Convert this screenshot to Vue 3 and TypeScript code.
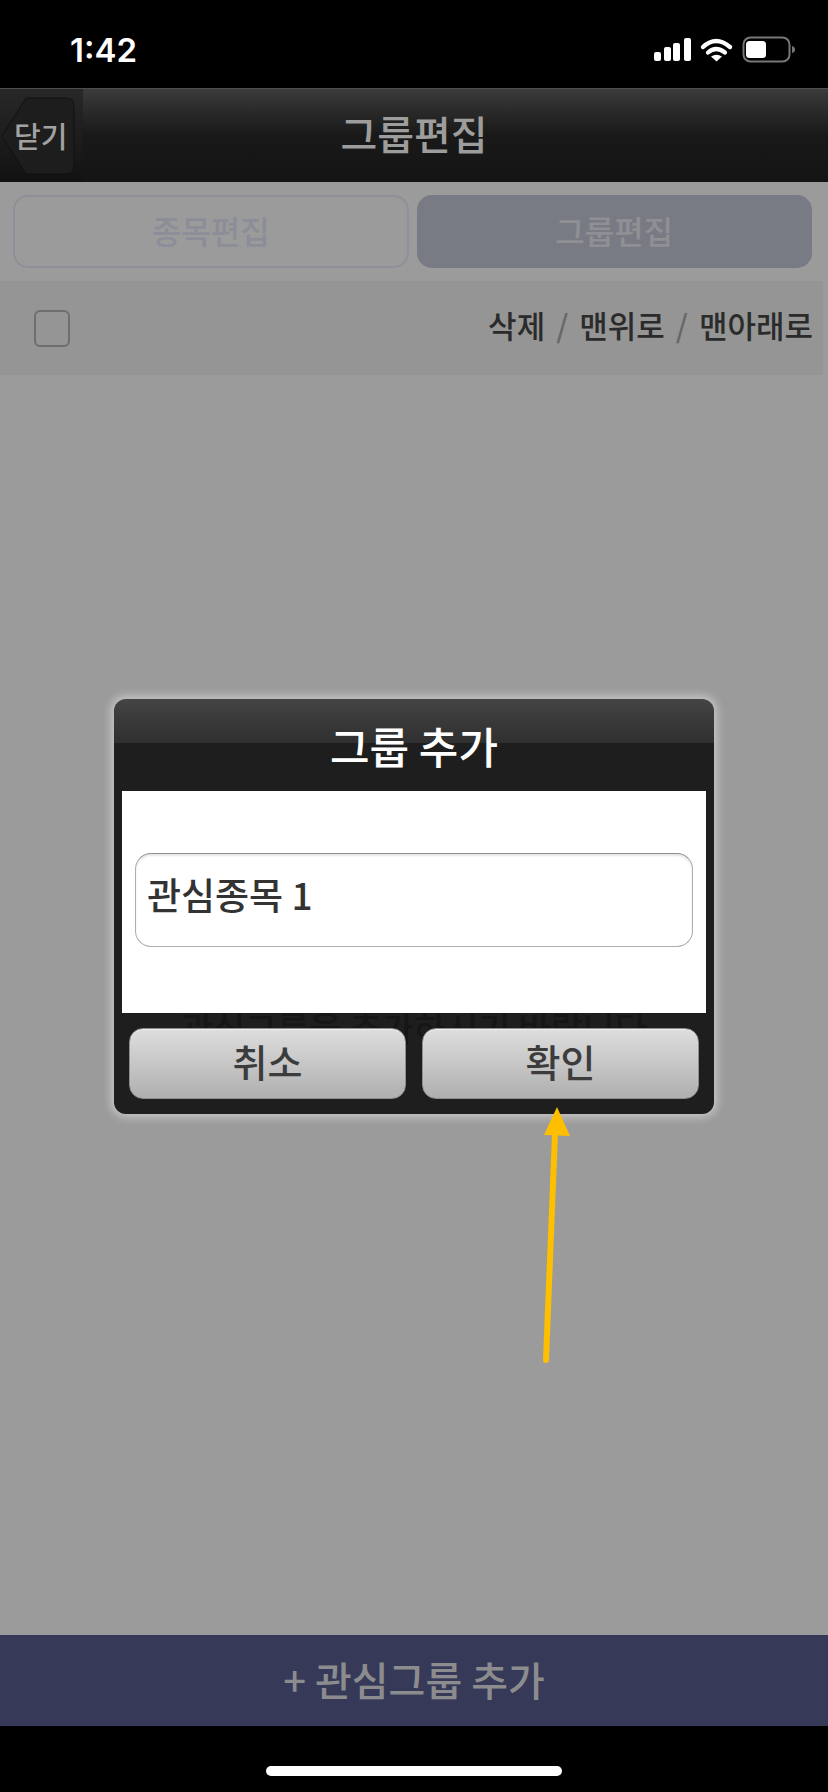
<template>
  <div class="screen">
    <header class="status-bar">
      <span class="clock">1:42</span>
      <svg class="status-icons" width="160" height="40" viewBox="0 0 160 40">
        <rect x="8" y="22" width="7" height="9" rx="2" fill="#fff" />
        <rect x="18" y="17" width="7" height="14" rx="2" fill="#fff" />
        <rect x="27" y="13" width="7" height="18" rx="2" fill="#fff" />
        <rect x="38" y="8" width="7" height="23" rx="2" fill="#fff" />
        <path d="M57 17 Q70 5 84 17" fill="none" stroke="#fff" stroke-width="4.4" stroke-linecap="round" />
        <path d="M62 22.5 Q70 15.5 79 22.5" fill="none" stroke="#fff" stroke-width="4.2" stroke-linecap="round" />
        <path d="M65 26.5 L70.5 31.5 L76 26.5 Q70.5 23 65 26.5 Z" fill="#fff" />
        <rect x="97.5" y="7.5" width="46" height="24" rx="7" fill="none" stroke="#777" stroke-width="2" />
        <rect x="100" y="11" width="20" height="17" rx="3.5" fill="#fff" />
        <path d="M146 16 Q149 17 149 19.5 Q149 22 146 23 Z" fill="#777" />
      </svg>
    </header>

    <nav class="nav-bar">
      <div class="back-cell">
        <svg class="back-shape" width="76" height="78" viewBox="0 0 76 78">
          <path
            d="M26 1 H66 Q74 1 74 9 V69 Q74 77 66 77 H26 L2 39 Z"
            fill="#1d1d1d"
            stroke="#111"
            stroke-width="1"
          />
        </svg>
        <span class="back-label">닫기</span>
      </div>
      <h1 class="nav-title">그룹편집</h1>
    </nav>

    <div class="segments">
      <div class="segment">종목편집</div>
      <div class="segment active">그룹편집</div>
    </div>

    <div class="toolbar">
      <span class="checkbox"></span>
      <div class="toolbar-actions">
        <span>삭제</span><i>/</i><span>맨위로</span><i>/</i><span>맨아래로</span>
      </div>
    </div>

    <main class="content"></main>

    <div class="add-bar">+ 관심그룹 추가</div>

    <footer class="home-area">
      <span class="home-bar"></span>
    </footer>

    <section class="dialog">
      <span class="behind-text">관심그룹을 추가하시기 바랍니다</span>
      <h2 class="dialog-title">그룹 추가</h2>
      <div class="dialog-body">
        <div class="field">관심종목 1</div>
      </div>
      <div class="dialog-actions">
        <button class="dialog-btn">취소</button>
        <button class="dialog-btn">확인</button>
      </div>
    </section>

    <svg class="arrow" width="40" height="260" viewBox="0 0 40 260">
      <line x1="12" y1="256" x2="21" y2="30" stroke="#fdbf00" stroke-width="6" stroke-linecap="round" />
      <path d="M23 3 L36 32 L10 31 Z" fill="#fdbf00" />
    </svg>
  </div>
</template>

<script setup lang="ts">
</script>

<style>
body {
  background: #000;
}
</style>

<style scoped>
.screen {
  position: relative;
  display: flex;
  flex-direction: column;
  width: 828px;
  height: 1792px;
  overflow: hidden;
  background: #9b9b9b;
  font-family: "Noto Sans CJK KR", "Noto Sans", sans-serif;
}

.status-bar {
  display: flex;
  align-items: center;
  justify-content: space-between;
  height: 88px;
  padding: 12px 22px 0 70px;
  box-sizing: border-box;
  background: #000;
}

.clock {
  color: #fff;
  font-family: Inter, Roboto, sans-serif;
  font-size: 33px;
  font-weight: 600;
}

.nav-bar {
  position: relative;
  display: flex;
  align-items: center;
  justify-content: center;
  height: 94px;
  box-sizing: border-box;
  border-top: 1px solid #4d4d4d;
  background: linear-gradient(#3b3b3b 0%, #2b2b2b 22%, #191919 50%, #141414 100%);
}

.back-cell {
  position: absolute;
  left: 0;
  top: 0;
  display: flex;
  align-items: center;
  width: 83px;
  height: 93px;
  background: linear-gradient(#282828, #121212);
}

.back-shape {
  position: absolute;
  left: 0;
  top: 8px;
}

.back-label {
  position: relative;
  margin: 0 0 2px 14px;
  color: #a2a2a2;
  font-size: 29px;
  font-weight: 500;
}

.nav-title {
  margin: 0 0 6px;
  color: #9d9d9d;
  font-size: 40px;
  font-weight: 500;
}

.segments {
  display: flex;
  gap: 8px;
  height: 99px;
  padding: 13px 16px 13px 13px;
  box-sizing: border-box;
}

.segment {
  display: flex;
  flex: 1;
  align-items: center;
  justify-content: center;
  padding-bottom: 4px;
  box-sizing: border-box;
  border: 2px solid #8f8f9a;
  border-radius: 15px;
  color: #8b8d99;
  font-size: 32px;
  font-weight: 500;
}

.segment.active {
  border-color: #787b84;
  background: #787b84;
  color: #8f9094;
}

.toolbar {
  display: flex;
  align-items: center;
  justify-content: space-between;
  width: 823px;
  height: 94px;
  padding: 0 10px 0 34px;
  box-sizing: border-box;
  background: #959595;
}

.checkbox {
  width: 36px;
  height: 37px;
  box-sizing: border-box;
  border: 2px solid #6e6e6e;
  border-radius: 6px;
}

.toolbar-actions {
  display: flex;
  gap: 11px;
  margin-bottom: 8px;
  color: #2b2b2b;
  font-size: 31px;
  font-weight: 500;
}

.toolbar-actions i {
  color: #686868;
  font-style: normal;
}

.content {
  flex: 1;
}

.add-bar {
  display: flex;
  align-items: center;
  justify-content: center;
  height: 91px;
  padding-bottom: 4px;
  box-sizing: border-box;
  background: #363a58;
  color: #8c8c8f;
  font-size: 40px;
  font-weight: 500;
}

.home-area {
  display: flex;
  justify-content: center;
  height: 66px;
  padding-top: 40px;
  box-sizing: border-box;
  background: #000;
}

.home-bar {
  width: 296px;
  height: 10px;
  border-radius: 5px;
  background: #fff;
}

.dialog {
  position: absolute;
  left: 114px;
  top: 699px;
  width: 600px;
  height: 415px;
  padding: 0 8px;
  box-sizing: border-box;
  overflow: hidden;
  border-radius: 12px;
  background: linear-gradient(#444 0, #2f2f2f 44px, #1e1e1e 44px);
  box-shadow: 0 0 10px 3px rgba(255, 255, 255, 0.45);
}

.dialog-title {
  display: flex;
  align-items: center;
  justify-content: center;
  height: 92px;
  margin: 0;
  color: #fff;
  font-size: 43px;
  font-weight: 500;
}

.behind-text {
  position: absolute;
  left: 0;
  right: 0;
  top: 302px;
  color: #161616;
  font-size: 35px;
  font-weight: 500;
  text-align: center;
}

.dialog-body {
  position: relative;
  display: flex;
  align-items: center;
  height: 222px;
  padding: 0 13px;
  box-sizing: border-box;
  background: #fff;
}

.field {
  display: flex;
  flex: 1;
  align-items: center;
  height: 94px;
  margin-bottom: 4px;
  padding: 0 0 12px 11px;
  box-sizing: border-box;
  border: 1.5px solid #aeaeae;
  border-top-color: #8e8e8e;
  border-radius: 16px;
  box-shadow: inset 0 2px 2px rgba(0, 0, 0, 0.1);
  color: #333;
  font-size: 37px;
  font-weight: 500;
}

.dialog-actions {
  position: relative;
  display: flex;
  gap: 16px;
  padding: 15px 7px;
}

.dialog-btn {
  flex: 1;
  height: 71px;
  padding: 0 0 6px;
  border: 1px solid #8d8d8d;
  border-radius: 14px;
  background: linear-gradient(#dedede, #afafaf);
  box-shadow: inset 0 1px 1px rgba(255, 255, 255, 0.5);
  color: #3c3c3c;
  font-family: inherit;
  font-size: 38px;
  font-weight: 500;
}

.arrow {
  position: absolute;
  left: 534px;
  top: 1104px;
}
</style>
